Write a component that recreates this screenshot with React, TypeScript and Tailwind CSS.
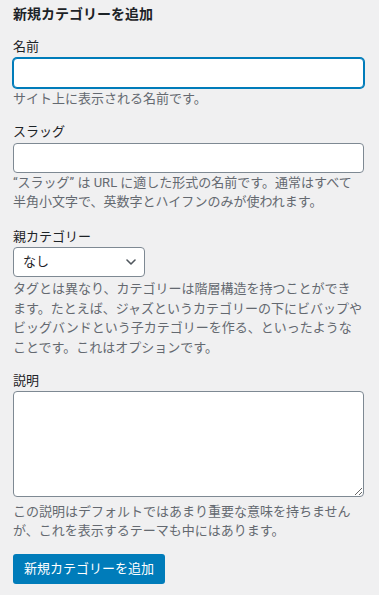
import React from "react";

const FONT = { fontFamily: 'Roboto, "Noto Sans CJK JP", sans-serif' };

function Help({ children, className = "" }: { children: React.ReactNode; className?: string }) {
  return <p className={"text-[13px] leading-[19.5px] text-[#646970] " + className}>{children}</p>;
}

function Label({ children, htmlFor, className = "" }: { children: React.ReactNode; htmlFor: string; className?: string }) {
  return (
    <label htmlFor={htmlFor} className={"block text-[13px] leading-[19.5px] text-[#1d2327] " + className}>
      {children}
    </label>
  );
}

export default function App() {
  return (
    <div className="min-h-[595px] w-[379px] bg-[#f0f0f1] px-[13px] pt-[4px]" style={FONT}>
      <h2 className="text-[14px] leading-[20px] font-semibold text-[#1d2327]">新規カテゴリーを追加</h2>

      <form className="w-[351px]" onSubmit={(e) => e.preventDefault()}>
        {/* 名前 */}
        <Label htmlFor="tag-name" className="mt-[13px]">名前</Label>
        <input
          id="tag-name"
          type="text"
          className="mt-[1px] block h-[30px] w-full rounded-[4px] border border-[#007cba] bg-white px-2 text-[14px] shadow-[0_0_0_1px_#007cba] outline-none"
        />
        <Help className="mt-[1px]">サイト上に表示される名前です。</Help>

        {/* スラッグ */}
        <Label htmlFor="tag-slug" className="mt-[14px]">スラッグ</Label>
        <input
          id="tag-slug"
          type="text"
          className="mt-[1px] block h-[30px] w-full rounded-[4px] border border-[#7e8993] bg-white px-2 text-[14px] outline-none"
        />
        <Help>“スラッグ” は URL に適した形式の名前です。通常はすべて半角小文字で、英数字とハイフンのみが使われます。</Help>

        {/* 親カテゴリー */}
        <Label htmlFor="parent" className="mt-[15px]">親カテゴリー</Label>
        <div className="relative mt-[1px] w-[132px]">
          <select
            id="parent"
            className="block h-[30px] w-full appearance-none rounded-[4px] border border-[#7e8993] bg-white pl-[9px] pr-6 text-[13px] text-[#1d2327] outline-none"
          >
            <option>なし</option>
          </select>
          <svg
            className="pointer-events-none absolute right-[9px] top-[12px]"
            width="10"
            height="6"
            viewBox="0 0 10 6"
            fill="none"
          >
            <path d="M1 1l4 4 4-4" stroke="#50575e" strokeWidth="1.6" strokeLinecap="round" strokeLinejoin="round" />
          </svg>
        </div>
        <Help className="mt-[2px]">
          タグとは異なり、カテゴリーは階層構造を持つことができ
          <br />
          ます。たとえば、ジャズというカテゴリーの下にビバップや
          <br />
          ビッグバンドという子カテゴリーを作る、といったような
          <br />
          ことです。これはオプションです。
        </Help>

        {/* 説明 */}
        <Label htmlFor="tag-description" className="mt-[14px]">説明</Label>
        <textarea
          id="tag-description"
          className="block h-[106px] w-full rounded-[4px] border border-[#7e8993] bg-white px-2 py-1 text-[14px] outline-none"
        />
        <Help className="mt-[5px]">
          この説明はデフォルトではあまり重要な意味を持ちませんが、これを表示するテーマも中にはあります。
        </Help>

        <button
          type="submit"
          className="mt-[13px] h-[30px] rounded-[3px] bg-[#007cba] px-[11px] text-[13px] leading-[28px] text-white"
        >
          新規カテゴリーを追加
        </button>
      </form>
    </div>
  );
}
